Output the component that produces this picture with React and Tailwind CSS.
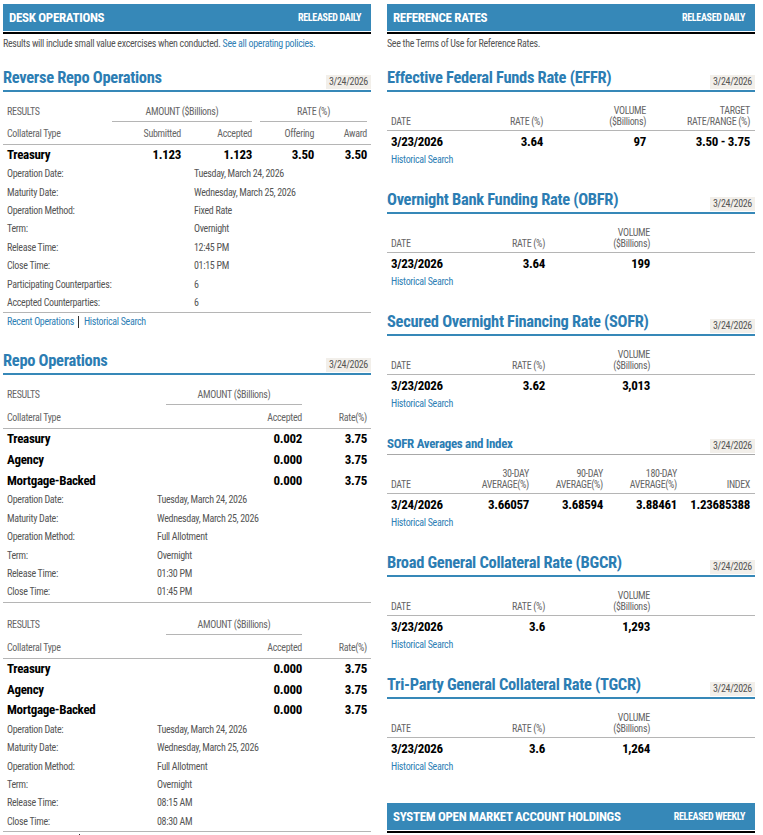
import React from "react";

const FONT = "font-['Roboto_Condensed','Liberation_Sans_Narrow','DejaVu_Sans_Condensed',sans-serif] tracking-[-0.02em]";

function Bar({ title, right }) {
  return (
    <div>
      <div className="h-[27px] bg-[#3688b8] flex items-center justify-between pl-[6px] pr-[10px]">
        <span className="text-white font-bold text-[13px] leading-[16px]">{title}</span>
        <span className="text-white font-bold text-[10px] leading-[12px]">{right}</span>
      </div>
      <div className="mt-[1px] h-[2px] bg-black" />
    </div>
  );
}

function Heading({ title, date }) {
  return (
    <div className="h-[25px] flex items-end justify-between border-b-2 border-[#3688b8]">
      <span className="text-[16.5px] leading-[22px] font-bold text-[#2c7db3] mb-[1px]">{title}</span>
      <span className="mb-[1px] bg-[#f2efea] text-[10px] leading-[14px] px-[3px] text-[#555]">{date}</span>
    </div>
  );
}

function SmallHeading({ title, date }) {
  return (
    <div className="h-[21px] flex items-end justify-between border-b border-[#a8a8a8]">
      <span className="text-[13px] leading-[18px] font-bold text-[#2c7db3] mb-[1px]">{title}</span>
      <span className="mb-[1px] bg-[#f2efea] text-[10px] leading-[14px] px-[3px] text-[#555]">{date}</span>
    </div>
  );
}

function Details({ rows, labelW }) {
  return (
    <div className="border-b border-[#b5b5b5] px-[4px]">
      {rows.map(([l, v]) => (
        <div key={l} className="h-[18.4px] flex items-center text-[10px] leading-[12px] text-[#555]">
          <span className={labelW}>{l}</span>
          <span>{v}</span>
        </div>
      ))}
    </div>
  );
}

function Links() {
  return (
    <div className="pt-[3px] px-[4px] flex items-center text-[10px] leading-[12px] text-[#2f7fb5]">
      <span>Recent Operations</span>
      <span className="ml-[4px] pl-[5px] border-l border-[#333]">Historical Search</span>
    </div>
  );
}

function ReverseRepo() {
  const details = [
    ["Operation Date:", "Tuesday, March 24, 2026"],
    ["Maturity Date:", "Wednesday, March 25, 2026"],
    ["Operation Method:", "Fixed Rate"],
    ["Term:", "Overnight"],
    ["Release Time:", "12:45 PM"],
    ["Close Time:", "01:15 PM"],
    ["Participating Counterparties:", "6"],
    ["Accepted Counterparties:", "6"],
  ];
  const cols = "grid grid-cols-[105px_69px_71px_62px_53px] px-[4px]";
  return (
    <div className="mt-[17px]">
      <Heading title="Reverse Repo Operations" date="3/24/2026" />
      <div className={`${cols} h-[30px] items-end text-[10px] leading-[12px] text-[#666]`}>
        <span className="pb-[4px]">RESULTS</span>
        <span className="col-span-2 text-center pb-[3px] border-b border-[#b5b5b5]">AMOUNT ($Billions)</span>
        <span className="col-span-2 ml-[8px] text-center pb-[3px] border-b border-[#b5b5b5]">RATE (%)</span>
      </div>
      <div className={`${cols} h-[23px] items-end pb-[4px] border-b border-[#b5b5b5] text-[10px] leading-[12px] text-[#666]`}>
        <span>Collateral Type</span>
        <span className="text-right">Submitted</span>
        <span className="text-right">Accepted</span>
        <span className="text-right">Offering</span>
        <span className="text-right">Award</span>
      </div>
      <div className={`${cols} h-[20px] items-center text-[13px] leading-[16px] font-bold text-black`}>
        <span>Treasury</span>
        <span className="text-right">1.123</span>
        <span className="text-right">1.123</span>
        <span className="text-right">3.50</span>
        <span className="text-right">3.50</span>
      </div>
      <Details rows={details} labelW="w-[187px]" />
      <Links />
    </div>
  );
}

function RepoTable({ data, release, close, mt }) {
  const details = [
    ["Operation Date:", "Tuesday, March 24, 2026"],
    ["Maturity Date:", "Wednesday, March 25, 2026"],
    ["Operation Method:", "Full Allotment"],
    ["Term:", "Overnight"],
    ["Release Time:", release],
    ["Close Time:", close],
  ];
  const cols = "grid grid-cols-[159px_136px_65px] px-[4px]";
  return (
    <div className={mt}>
      <div className={`${cols} h-[30px] items-end text-[10px] leading-[12px] text-[#666]`}>
        <span className="pb-[4px]">RESULTS</span>
        <span className="text-center pb-[3px] border-b border-[#b5b5b5]">AMOUNT ($Billions)</span>
        <span />
      </div>
      <div className={`${cols} h-[24px] items-end pb-[4px] border-b border-[#b5b5b5] text-[10px] leading-[12px] text-[#666]`}>
        <span>Collateral Type</span>
        <span className="text-right">Accepted</span>
        <span className="text-right">Rate(%)</span>
      </div>
      {data.map(([n, a, r]) => (
        <div key={n} className={`${cols} h-[20.7px] items-center text-[13px] leading-[16px] font-bold text-black`}>
          <span>{n}</span>
          <span className="text-right">{a}</span>
          <span className="text-right">{r}</span>
        </div>
      ))}
      <Details rows={details} labelW="w-[150px]" />
    </div>
  );
}

function RateTable({ title, cols, headers, values, mt, small }) {
  return (
    <div className={mt}>
      {small ? <SmallHeading title={title} date="3/24/2026" /> : <Heading title={title} date="3/24/2026" />}
      <div className={`grid ${cols} pl-[4px] pr-[5px] h-[39px] items-end pb-[3px] border-b border-[#b5b5b5] text-[10px] leading-[11px] text-[#666]`}>
        {headers.map((h, i) => (
          <span key={i} className={i === 0 ? "" : "text-right"}>
            {h.map((line, j) => (
              <span key={j} className="block">{line}</span>
            ))}
          </span>
        ))}
      </div>
      <div className={`grid ${cols} pl-[4px] pr-[5px] h-[22px] items-center text-[13px] leading-[16px] font-bold text-black`}>
        {values.map((v, i) => (
          <span key={i} className={i === 0 ? "" : "text-right"}>{v}</span>
        ))}
      </div>
      <div className="mt-[1px] pl-[4px] text-[10px] leading-[12px] text-[#2f7fb5]">Historical Search</div>
    </div>
  );
}

export default function App() {
  const repo1 = [
    ["Treasury", "0.002", "3.75"],
    ["Agency", "0.000", "3.75"],
    ["Mortgage-Backed", "0.000", "3.75"],
  ];
  const repo2 = [
    ["Treasury", "0.000", "3.75"],
    ["Agency", "0.000", "3.75"],
    ["Mortgage-Backed", "0.000", "3.75"],
  ];
  const three = "grid-cols-[100px_54px_105px_100px]";
  return (
    <div className={`${FONT} w-[763px] h-[835px] overflow-hidden bg-white pt-[4px] pl-[3px]`}>
      <div className="grid grid-cols-[368px_368px] gap-x-[16px]">
        <div>
          <Bar title="DESK OPERATIONS" right="RELEASED DAILY" />
          <p className="mt-[4px] text-[10px] leading-[12px] text-[#555]">
            Results will include small value excercises when conducted.{" "}
            <span className="text-[#2f7fb5]">See all operating policies.</span>
          </p>
          <ReverseRepo />
          <div className="mt-[22px]">
            <Heading title="Repo Operations" date="3/24/2026" />
            <RepoTable data={repo1} release="01:30 PM" close="01:45 PM" mt="" />
            <RepoTable data={repo2} release="08:15 AM" close="08:30 AM" mt="mt-[2px]" />
            <div className="ml-[76px] mt-[2px] w-px h-[12px] bg-[#333]" />
          </div>
        </div>
        <div>
          <Bar title="REFERENCE RATES" right="RELEASED DAILY" />
          <p className="mt-[4px] text-[10px] leading-[12px] text-[#555]">
            See the Terms of Use for Reference Rates.
          </p>
          <RateTable
            mt="mt-[17px]"
            title="Effective Federal Funds Rate (EFFR)"
            cols="grid-cols-[96px_56px_103px_104px]"
            headers={[["DATE"], ["RATE (%)"], ["VOLUME", "($Billions)"], ["TARGET", "RATE/RANGE (%)"]]}
            values={["3/23/2026", "3.64", "97", "3.50 - 3.75"]}
          />
          <RateTable
            mt="mt-[23px]"
            title="Overnight Bank Funding Rate (OBFR)"
            cols={three}
            headers={[["DATE"], ["RATE (%)"], ["VOLUME", "($Billions)"]]}
            values={["3/23/2026", "3.64", "199"]}
          />
          <RateTable
            mt="mt-[23px]"
            title="Secured Overnight Financing Rate (SOFR)"
            cols={three}
            headers={[["DATE"], ["RATE (%)"], ["VOLUME", "($Billions)"]]}
            values={["3/23/2026", "3.62", "3,013"]}
          />
          <RateTable
            mt="mt-[24px]"
            small
            title="SOFR Averages and Index"
            cols="grid-cols-[80px_58px_74px_74px_73px]"
            headers={[["DATE"], ["30-DAY", "AVERAGE(%)"], ["90-DAY", "AVERAGE(%)"], ["180-DAY", "AVERAGE(%)"], ["INDEX"]]}
            values={["3/24/2026", "3.66057", "3.68594", "3.88461", "1.23685388"]}
          />
          <RateTable
            mt="mt-[23px]"
            title="Broad General Collateral Rate (BGCR)"
            cols={three}
            headers={[["DATE"], ["RATE (%)"], ["VOLUME", "($Billions)"]]}
            values={["3/23/2026", "3.6", "1,293"]}
          />
          <RateTable
            mt="mt-[23px]"
            title="Tri-Party General Collateral Rate (TGCR)"
            cols={three}
            headers={[["DATE"], ["RATE (%)"], ["VOLUME", "($Billions)"]]}
            values={["3/23/2026", "3.6", "1,264"]}
          />
          <div className="mt-[30px]">
            <Bar title="SYSTEM OPEN MARKET ACCOUNT HOLDINGS" right="RELEASED WEEKLY" />
          </div>
        </div>
      </div>
    </div>
  );
}
